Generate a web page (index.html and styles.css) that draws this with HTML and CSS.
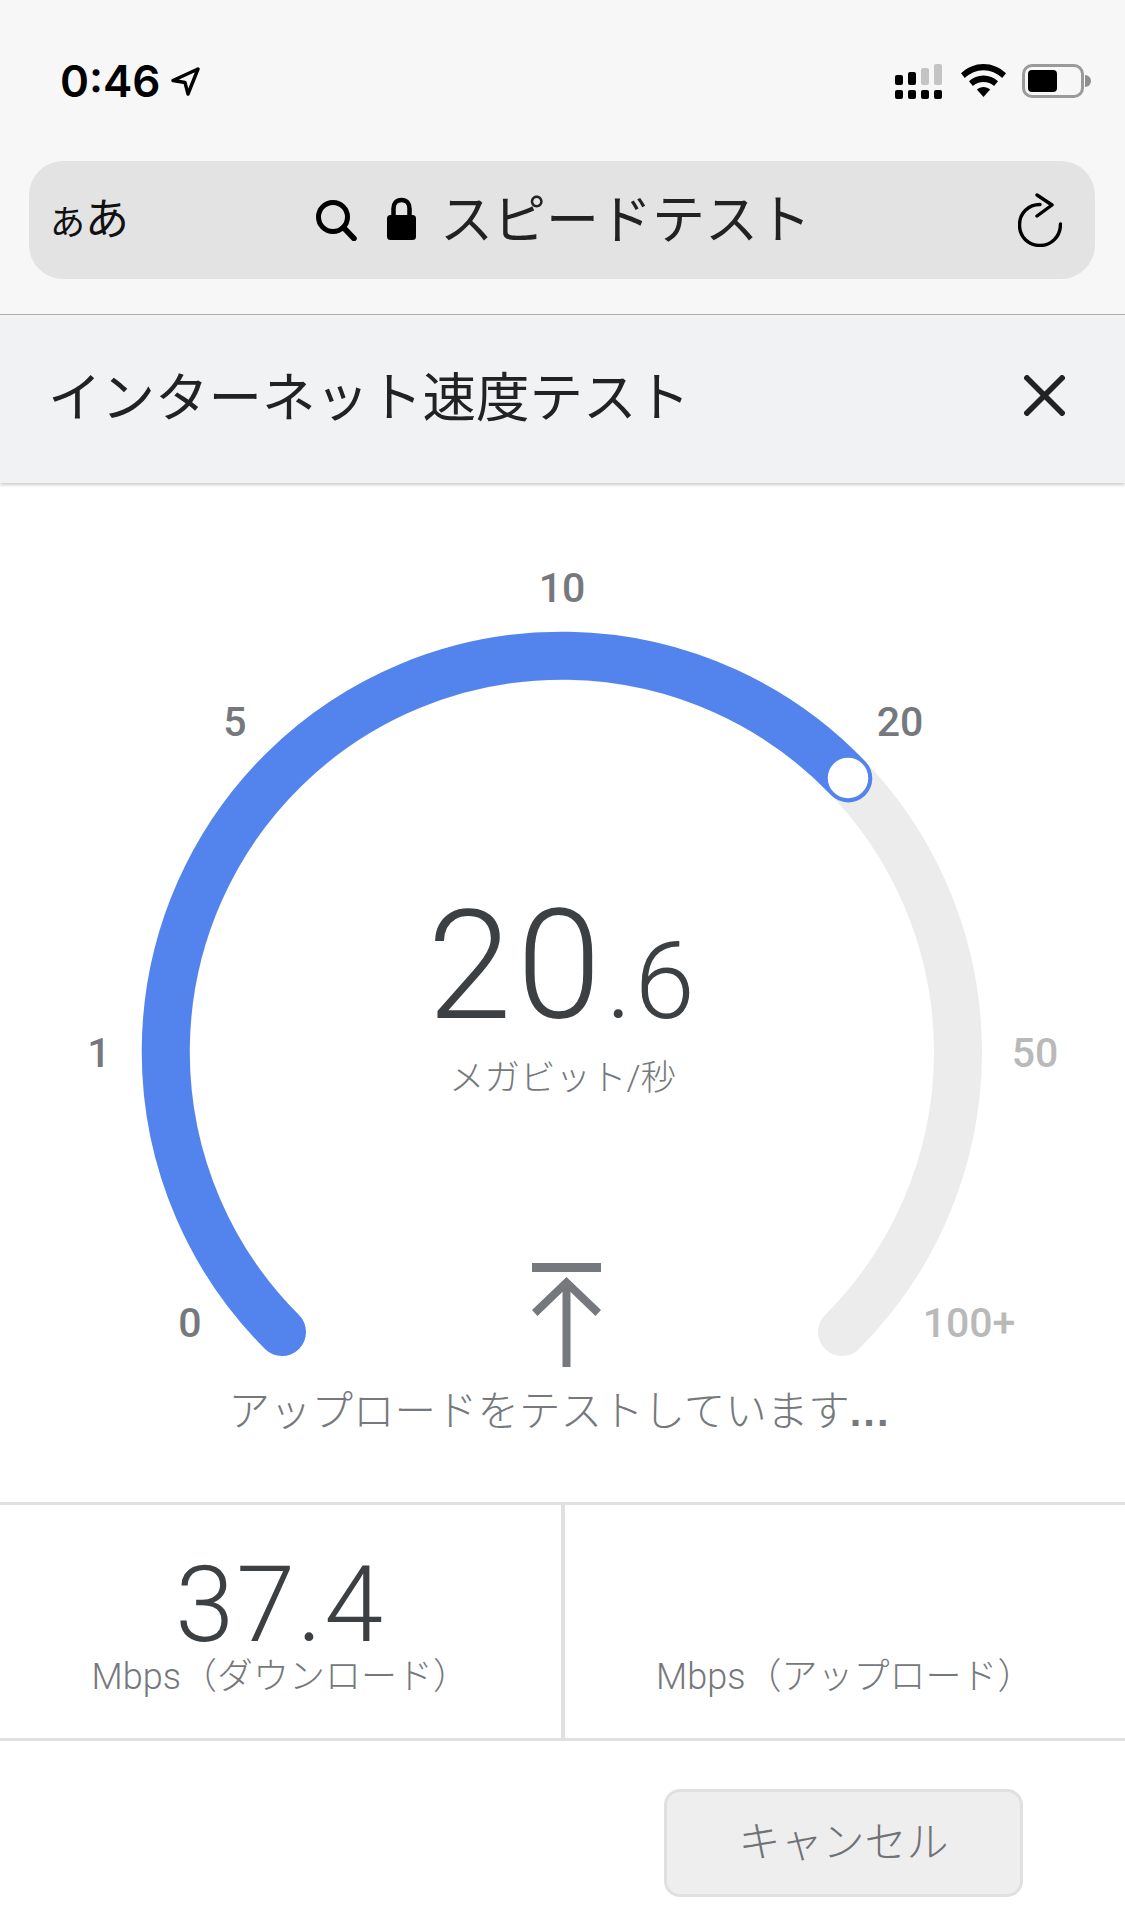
FILE: index.html
```html
<!DOCTYPE html>
<html lang="ja">
<head>
<meta charset="utf-8">
<title>インターネット速度テスト</title>
<link rel="stylesheet" href="styles.css">
</head>
<body>
<div class="browser">
  <div class="status">
    <div class="status-left">
      <span class="time">0:46</span>
      <svg class="loc" viewBox="0 0 29 29"><path d="M27 2 2 13.500 14 15.500 17 27Z" fill="none" stroke="#000" stroke-width="3.400" stroke-linejoin="round"/></svg>
    </div>
    <div class="status-right">
      <svg class="signal" viewBox="0 0 47 35">
        <rect x="0" y="11" width="8" height="10" rx="2"/><rect x="13" y="8" width="8" height="13" rx="2"/>
        <rect class="dim" x="26" y="4" width="8" height="17" rx="2"/><rect class="dim" x="39" y="0" width="8" height="21" rx="2"/>
        <rect x="0" y="26" width="8" height="9" rx="2"/><rect x="13" y="26" width="8" height="9" rx="2"/>
        <rect x="26" y="26" width="8" height="9" rx="2"/><rect x="39" y="26" width="8" height="9" rx="2"/>
      </svg>
      <svg class="wifi" viewBox="0 0 45 33">
        <path d="M22.500 0C14 0 6.300 3.400 0 9.300L3.800 14C9 9.200 15.500 6.300 22.500 6.300S36 9.200 41.200 14L45 9.300C38.700 3.400 31 0 22.500 0Z"/>
        <path d="M22.500 11.500C17 11.500 12 13.700 8 17.300L11.900 22C14.800 19.500 18.500 18 22.500 18S30.200 19.500 33.100 22L37 17.300C33 13.700 28 11.500 22.500 11.500Z"/>
        <path d="M22.500 23C20 23 17.800 23.900 15.900 25.400L22.500 33 29.100 25.400C27.200 23.900 25 23 22.500 23Z"/>
      </svg>
      <div class="battery"><div class="battery-fill"></div></div>
      <div class="battery-nub"></div>
    </div>
  </div>
  <div class="address">
    <span class="aa"><span class="aa-small">あ</span>あ</span>
    <div class="address-center">
      <svg class="search" viewBox="0 0 41 41"><circle cx="17" cy="17" r="14.500" fill="none" stroke="#000" stroke-width="5"/><path d="M27.500 27.500 38 38.500" stroke="#000" stroke-width="5.500" stroke-linecap="round"/></svg>
      <svg class="lock" viewBox="0 0 29 43"><path d="M6.500 20V11.500C6.500 6.500 9.500 3 14.500 3S22.500 6.500 22.500 11.500V20" fill="none" stroke="#000" stroke-width="4.500"/><rect x="0" y="18" width="29" height="25" rx="3.500"/></svg>
      <span class="address-text">スピードテスト</span>
    </div>
    <svg class="reload" viewBox="0 0 44 54"><path d="M22 11.500C10.500 11.500 1.500 20 1.500 32S10.500 52.500 22 52.500 42.500 43.500 42.500 31" fill="none" stroke="#000" stroke-width="3.400" stroke-linecap="round"/><path d="M19 2 34 12 19 23" fill="none" stroke="#000" stroke-width="3.400" stroke-linecap="round" stroke-linejoin="round"/></svg>
  </div>
</div>

<header class="header">
  <h1 class="title">インターネット速度テスト</h1>
  <svg class="close" viewBox="0 0 41 41"><path d="M1 1 40 40M40 1 1 40" stroke="#222" stroke-width="5.600" fill="none"/></svg>
</header>

<main>
  <section class="gauge">
    <svg class="dial" viewBox="0 0 1125 1019">
      <path d="M282 849A396 396 0 1 1 842 849" fill="none" stroke="#ececec" stroke-width="48" stroke-linecap="round"/>
      <path d="M282 849A396 396 0 1 1 848.300 295.400" fill="none" stroke="#5383ec" stroke-width="48" stroke-linecap="round"/>
      <circle cx="848" cy="295" r="21.500" fill="#fff" stroke="#5383ec" stroke-width="2.500"/>
    </svg>
    <span class="tick t0">0</span>
    <span class="tick t1">1</span>
    <span class="tick t5">5</span>
    <span class="tick t10">10</span>
    <span class="tick t20">20</span>
    <span class="tick off t50">50</span>
    <span class="tick off t100">100+</span>
    <div class="readout">
      <div class="speed"><span class="speed-int">20</span><span class="speed-frac">.6</span></div>
      <div class="unit">メガビット/秒</div>
    </div>
    <div class="phase">
      <svg class="phase-icon" viewBox="0 0 69 104"><rect x="0" y="0" width="69" height="9" fill="#75787c"/><path d="M34.500 104V20" stroke="#75787c" stroke-width="8" fill="none"/><path d="M34.500 14 69 47 63.500 53 34.500 25 5.500 53 0 47Z" fill="#75787c"/></svg>
      <div class="phase-text">アップロードをテストしています<span class="dots">...</span></div>
    </div>
  </section>

  <section class="results">
    <div class="result">
      <div class="result-value">37.4</div>
      <div class="result-label">Mbps（ダウンロード）</div>
    </div>
    <div class="result">
      <div class="result-value"></div>
      <div class="result-label">Mbps（アップロード）</div>
    </div>
  </section>

  <div class="actions">
    <button class="cancel" type="button">キャンセル</button>
  </div>
</main>
</body>
</html>
```
FILE: styles.css
```css
* { box-sizing: border-box; }
html, body { margin: 0; padding: 0; }
body {
  width: 1125px;
  height: 1923px;
  overflow: hidden;
  background: #fff;
  font-family: "Liberation Sans", "Noto Sans CJK JP", sans-serif;
}

.browser {
  height: 315px;
  padding-top: 64px;
  background: #f7f7f7;
  border-bottom: 1px solid #aeaeae;
}
.status {
  height: 35px;
  margin-bottom: 62px;
  padding: 0 34px 0 60px;
  display: flex;
  justify-content: space-between;
  align-items: flex-start;
}
.status-left { display: flex; align-items: center; gap: 10px; height: 35px; }
.time {
  font-family: Inter, "Liberation Sans", sans-serif;
  font-size: 44px;
  font-weight: 600;
  line-height: 35px;
  color: #000;
}
.loc { width: 29px; height: 29px; }
.status-right { display: flex; align-items: flex-start; }
.signal { width: 47px; height: 35px; fill: #000; margin-right: 19px; }
.signal .dim { fill: #c4c4c4; }
.wifi { width: 45px; height: 33px; fill: #000; margin-right: 16px; }
.battery {
  width: 62px;
  height: 34px;
  border: 3px solid #9a9a9a;
  border-radius: 10px;
  padding: 3px;
}
.battery-fill { width: 29px; height: 22px; background: #000; border-radius: 4px; }
.battery-nub {
  width: 6px;
  height: 12px;
  margin: 11px 0 0 1px;
  background: #8e8e8e;
  border-radius: 0 6px 6px 0;
}

.address {
  height: 118px;
  margin: 0 30px 0 29px;
  padding: 0 33px 0 21px;
  background: #e3e3e3;
  border-radius: 34px;
  display: flex;
  align-items: center;
  justify-content: space-between;
  position: relative;
}
.aa { font-size: 44px; line-height: 1; color: #111; font-weight: 400; }
.aa-small { font-size: 35px; }
.address-center {
  position: absolute;
  left: 287px;
  top: 36px;
  display: flex;
  align-items: flex-start;
}
.search { width: 41px; height: 41px; margin: 3px 30px 0 0; }
.lock { width: 29px; height: 43px; margin-right: 24px; }
.address-text {
  font-size: 53px;
  line-height: 48px;
  color: #222;
  font-weight: 400;
}
.reload { width: 44px; height: 54px; }

.header {
  height: 168px;
  padding: 0 60px 0 48px;
  display: flex;
  justify-content: space-between;
  align-items: center;
  background: #f1f2f4;
  box-shadow: 0 2px 3px rgba(0, 0, 0, .2);
  position: relative;
}
.title {
  margin: 0;
  font-size: 53.500px;
  font-weight: 400;
  line-height: 64px;
  color: #222;
}
.close { width: 41px; height: 41px; margin-bottom: 8px; }

.gauge {
  position: relative;
  height: 1019px;
}
.dial { display: block; width: 1125px; height: 1019px; }
.tick {
  position: absolute;
  width: 120px;
  margin-left: -60px;
  text-align: center;
  font-family: Roboto, "Liberation Sans", sans-serif;
  font-size: 41px;
  font-weight: 500;
  line-height: 40px;
  color: #75787c;
}
.tick.off { color: #b9b9b9; }
.t0 { left: 190px; top: 820px; }
.t1 { left: 99px; top: 550px; }
.t5 { left: 235px; top: 219px; }
.t10 { left: 562px; top: 85px; }
.t20 { left: 900px; top: 219px; }
.t50 { left: 1035px; top: 550px; }
.t100 { left: 969px; top: 820px; }

.readout {
  position: absolute;
  left: 0;
  right: 0;
  top: 395px;
  display: flex;
  flex-direction: column;
  align-items: center;
  color: #3c4043;
}
.speed {
  font-family: Roboto, "Liberation Sans", sans-serif;
  font-weight: 300;
  line-height: 176px;
  height: 176px;
  white-space: nowrap;
}
.speed-int { font-size: 152px; letter-spacing: 5px; }
.speed-frac { font-size: 108px; letter-spacing: 3px; }
.unit {
  margin-top: 0;
  font-family: Roboto, "Liberation Sans", "Noto Sans CJK JP", sans-serif;
  font-size: 35.500px;
  line-height: 48px;
  font-weight: 300;
  color: #75787c;
}

.phase {
  position: absolute;
  left: 0;
  right: 0;
  top: 780px;
  display: flex;
  flex-direction: column;
  align-items: center;
}
.phase-icon { width: 69px; height: 104px; margin-left: 8px; }
.phase-text {
  margin: 17px 0 0 -6px;
  font-size: 41.500px;
  line-height: 56px;
  font-weight: 300;
  color: #75787c;
}
.dots { font-weight: 700; letter-spacing: 2px; }

.results {
  height: 239px;
  display: flex;
  border-top: 3px solid #e0e0e0;
  border-bottom: 3px solid #e0e0e0;
}
.result {
  flex: 1;
  display: flex;
  flex-direction: column;
  align-items: center;
  padding-top: 50px;
}
.result + .result { border-left: 4px solid #e0e0e0; }
.result-value {
  height: 100px;
  font-family: Roboto, "Liberation Sans", sans-serif;
  font-size: 106px;
  font-weight: 300;
  line-height: 100px;
  letter-spacing: 2px;
  color: #3c4043;
}
.result-label {
  font-family: Roboto, "Liberation Sans", "Noto Sans CJK JP", sans-serif;
  font-size: 36px;
  line-height: 44px;
  font-weight: 300;
  color: #75787c;
}

.actions {
  display: flex;
  justify-content: flex-end;
  padding: 48px 102px 0 0;
}
.cancel {
  width: 359px;
  height: 108px;
  padding: 0;
  background: #eeeeee;
  border: 3px solid #e0e0e0;
  border-radius: 16px;
  font: 300 42px/1 "Liberation Sans", "Noto Sans CJK JP", sans-serif;
  color: #6f7276;
}
```
